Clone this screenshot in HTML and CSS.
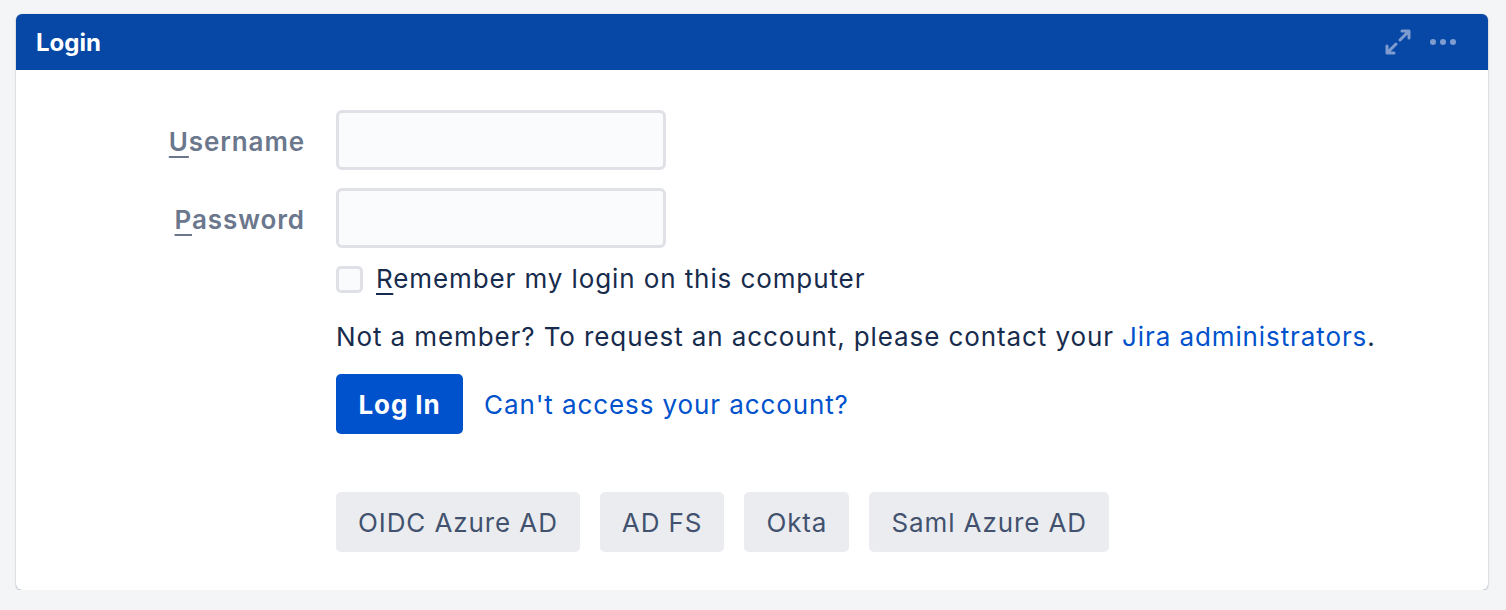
FILE: index.html
```html
<!DOCTYPE html>
<html lang="en">
<head>
    <meta charset="UTF-8">
    <meta name="viewport" content="width=device-width, initial-scale=1.0">
    <title>Login</title>
    <link rel="stylesheet" href="styles.css">
</head>
<body>
    <div class="card">
        <div class="card-header">
            <h2>Login</h2>
            <div class="header-tools">
                <svg class="tool-icon" width="30" height="30" viewBox="0 0 30 30">
                    <path d="M17 13 L26 4 M19 4 H26 V11" fill="none" stroke="currentColor" stroke-width="3" stroke-linecap="round" stroke-linejoin="round"/>
                    <path d="M13 17 L4 26 M4 19 V26 H11" fill="none" stroke="currentColor" stroke-width="3" stroke-linecap="round" stroke-linejoin="round"/>
                </svg>
                <svg class="tool-icon" width="28" height="8" viewBox="0 0 28 8">
                    <circle cx="4" cy="4" r="3" fill="currentColor"/>
                    <circle cx="14" cy="4" r="3" fill="currentColor"/>
                    <circle cx="24" cy="4" r="3" fill="currentColor"/>
                </svg>
            </div>
        </div>
        <form class="card-body" id="loginForm">
            <div class="field">
                <label for="username"><u>U</u>sername</label>
                <input type="text" id="username" name="username">
            </div>
            <div class="field">
                <label for="password"><u>P</u>assword</label>
                <input type="password" id="password" name="password">
            </div>
            <div class="field-plain remember">
                <label class="check"><input type="checkbox" name="remember"><span><u>R</u>emember my login on this computer</span></label>
            </div>
            <div class="field-plain note">
                Not a member? To request an account, please contact your <a href="#">Jira administrators</a>.
            </div>
            <div class="field-plain actions">
                <button type="submit" class="btn-primary">Log In</button>
                <a href="#">Can't access your account?</a>
            </div>
            <div class="field-plain sso">
                <button type="button" class="btn-sso">OIDC Azure AD</button>
                <button type="button" class="btn-sso">AD FS</button>
                <button type="button" class="btn-sso">Okta</button>
                <button type="button" class="btn-sso">Saml Azure AD</button>
            </div>
        </form>
    </div>
</body>
</html>
```

FILE: styles.css
```css
body {
    font-family: Inter, "Noto Sans", sans-serif;
    margin: 0;
    padding: 14px 18px 0 16px;
    background-color: #f4f5f7;
    color: #172b4d;
}
.card {
    background: white;
    border-radius: 6px;
    box-shadow: 0 1px 2px rgba(9, 30, 66, 0.25), 0 0 1px rgba(9, 30, 66, 0.3);
    overflow: hidden;
}
.card-header {
    height: 56px;
    background-color: #0747a6;
    display: flex;
    align-items: center;
    justify-content: space-between;
    padding: 0 31px 0 20px;
}
.card-header h2 {
    margin: 0;
    color: white;
    font-size: 24px;
    font-weight: 700;
}
.header-tools {
    display: flex;
    align-items: center;
    gap: 16px;
    color: #7f9ccf;
}
.card-body {
    padding: 40px 0 38px 0;
    display: flex;
    flex-direction: column;
    font-size: 26px;
    letter-spacing: 0.9px;
}
.field {
    display: grid;
    grid-template-columns: 289px 330px;
    column-gap: 31px;
    align-items: center;
    margin-bottom: 18px;
}
.field label {
    text-align: right;
    color: #6b778c;
    font-weight: 600;
    padding-top: 3px;
}
u {
    text-underline-offset: 5px;
    text-decoration-thickness: 2px;
}
.field input {
    height: 60px;
    box-sizing: border-box;
    border: 3px solid #dfe1e6;
    border-radius: 6px;
    background: #fafbfc;
    font-size: 22px;
    padding: 0 10px;
}
.field-plain {
    margin-left: 320px;
}
.remember {
    margin-top: -5px;
    line-height: 36px;
}
.check {
    display: flex;
    align-items: center;
    gap: 13px;
}
.check input {
    appearance: none;
    margin: 0;
    width: 27px;
    height: 27px;
    border: 3px solid #dfe1e6;
    border-radius: 5px;
    background: #fafbfc;
}
.note {
    margin-top: 22px;
    line-height: 36px;
}
a {
    color: #0052cc;
    text-decoration: none;
}
.actions {
    margin-top: 19px;
    display: flex;
    align-items: center;
    gap: 21px;
}
.btn-primary {
    height: 60px;
    width: 127px;
    border: none;
    border-radius: 5px;
    background-color: #0052cc;
    color: white;
    font-family: inherit;
    font-size: 26px;
    letter-spacing: 0.9px;
    font-weight: 700;
}
.sso {
    margin-top: 58px;
    display: flex;
    gap: 20px;
}
.btn-sso {
    height: 60px;
    padding: 0 22px;
    border: none;
    border-radius: 5px;
    background-color: #ebecf0;
    color: #42526e;
    font-family: inherit;
    font-size: 26px;
    letter-spacing: 0.9px;
}
```
